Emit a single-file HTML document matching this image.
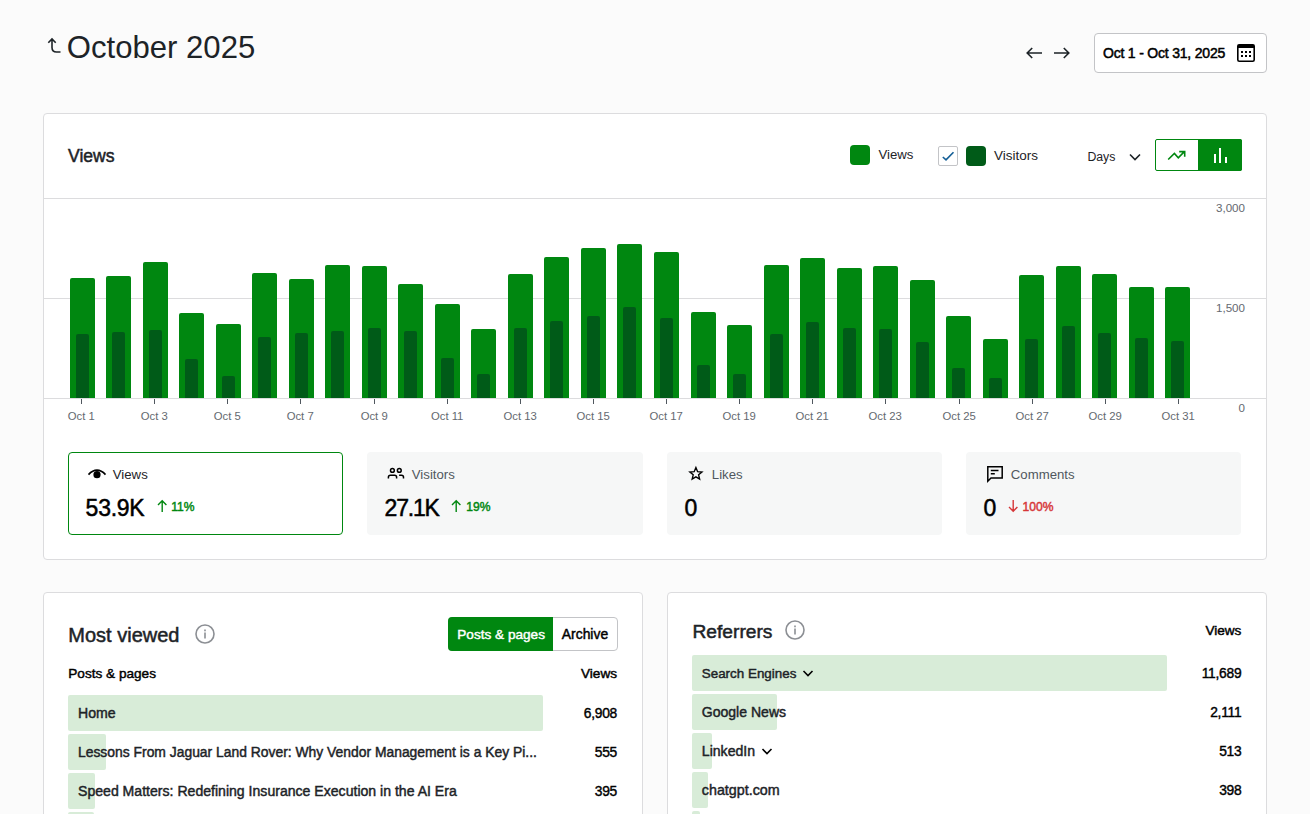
<!DOCTYPE html>
<html><head><meta charset="utf-8"><style>
html,body{margin:0;padding:0;}
body{width:1310px;height:814px;overflow:hidden;position:relative;background:#fbfbfb;font-family:"Liberation Sans", sans-serif;}
.t{position:absolute;white-space:nowrap;line-height:1;}
</style></head><body>
<svg style="position:absolute;left:44px;top:36px" width="20" height="20" viewBox="0 0 20 20"><path d="M8 3.2 L8 11.5 Q8 16 12.5 16 L16.5 16 M4.3 6.7 L8 3 L11.7 6.7" fill="none" stroke="#1d2327" stroke-width="1.6"/></svg>
<div class="t" style="left:66.8px;top:32px;font-size:31.1px;color:#1d2327;font-weight:400;">October 2025</div>
<svg style="position:absolute;left:1024px;top:44px" width="20" height="18" viewBox="0 0 20 18"><path d="M18 9 L3.2 9 M8.2 4 L3.2 9 L8.2 14" fill="none" stroke="#1d2327" stroke-width="1.6"/></svg>
<svg style="position:absolute;left:1052px;top:44px" width="20" height="18" viewBox="0 0 20 18"><path d="M2 9 L16.8 9 M11.8 4 L16.8 9 L11.8 14" fill="none" stroke="#1d2327" stroke-width="1.6"/></svg>
<div style="position:absolute;left:1094px;top:33px;width:173px;height:40px;box-sizing:border-box;background:#fff;border:1px solid #c3c4c7;border-radius:4px;"></div>
<div class="t" style="left:1103px;top:46px;font-size:14px;color:#000;font-weight:400;-webkit-text-stroke:0.5px #000;letter-spacing:-0.2px;">Oct 1 - Oct 31, 2025</div>
<svg style="position:absolute;left:1236px;top:43px" width="20" height="20" viewBox="0 0 20 20"><rect x="1.8" y="1.8" width="16.4" height="16.4" rx="1.5" fill="none" stroke="#000" stroke-width="1.6"/><rect x="1.8" y="1.8" width="16.4" height="3.2" fill="#000"/><rect x="5" y="8" width="2" height="2" fill="#000"/><rect x="5" y="12" width="2" height="2" fill="#000"/><rect x="9" y="8" width="2" height="2" fill="#000"/><rect x="9" y="12" width="2" height="2" fill="#000"/><rect x="13" y="8" width="2" height="2" fill="#000"/><rect x="13" y="12" width="2" height="2" fill="#000"/></svg>
<div style="position:absolute;left:43px;top:113px;width:1224px;height:447px;box-sizing:border-box;background:#fff;border:1px solid #dcdcde;border-radius:4px;"></div>
<div class="t" style="left:68px;top:148px;font-size:17.6px;color:#1d2327;font-weight:400;-webkit-text-stroke:0.5px #1d2327;">Views</div>
<div style="position:absolute;left:850px;top:145px;width:20px;height:20px;background:#008710;border-radius:4px;"></div>
<div class="t" style="left:878.5px;top:148px;font-size:13.2px;color:#1d2327;font-weight:400;">Views</div>
<div style="position:absolute;left:938px;top:146px;width:20px;height:20px;box-sizing:border-box;background:#fff;border:1px solid #c3c4c7;border-radius:2px;"></div>
<svg style="position:absolute;left:938px;top:146px" width="20" height="20" viewBox="0 0 20 20"><path d="M4.8 11 L8 13.8 L15.5 6.3" fill="none" stroke="#135e96" stroke-width="1.6"/></svg>
<div style="position:absolute;left:966px;top:146px;width:20px;height:20px;background:#005b18;border-radius:4px;"></div>
<div class="t" style="left:994px;top:149px;font-size:13.5px;color:#1d2327;font-weight:400;">Visitors</div>
<div class="t" style="left:1087.4px;top:151px;font-size:12.3px;color:#1d2327;font-weight:400;">Days</div>
<svg style="position:absolute;left:1127px;top:150px" width="16" height="14" viewBox="0 0 16 14"><path d="M3 4.5 L8 9.5 L13 4.5" fill="none" stroke="#1d2327" stroke-width="1.6"/></svg>
<div style="position:absolute;left:1155px;top:139px;width:87px;height:32px;box-sizing:border-box;background:#fff;border:1.5px solid #008710;border-radius:2px;"></div>
<div style="position:absolute;left:1198px;top:139px;width:44px;height:32px;background:#008710;border-radius:0 2px 2px 0;"></div>
<svg style="position:absolute;left:1166px;top:148px" width="22" height="16" viewBox="0 0 22 16"><path d="M2.2 11.5 L8.4 5.4 L12.3 9.8 L18.1 3.9 M13.2 3.6 L18.7 3.6 L18.7 8.8" fill="none" stroke="#008710" stroke-width="1.6"/></svg>
<div style="position:absolute;left:1213.6px;top:154px;width:2px;height:8.6px;background:#fff;"></div>
<div style="position:absolute;left:1219px;top:148px;width:2px;height:14.6px;background:#fff;"></div>
<div style="position:absolute;left:1224.5px;top:157px;width:2px;height:5.6px;background:#fff;"></div>
<div style="position:absolute;left:44px;top:198px;width:1222px;height:1px;background:#dcdcde;"></div>
<div style="position:absolute;left:44px;top:298px;width:1222px;height:1px;background:#dcdcde;"></div>
<div style="position:absolute;left:44px;top:398px;width:1222px;height:1px;background:#dcdcde;"></div>
<div style="position:absolute;left:70px;top:278px;width:25px;height:120px;background:#008710;border-radius:2px 2px 0 0;"></div>
<div style="position:absolute;left:76px;top:334px;width:13px;height:64px;background:#005b18;border-radius:2px 2px 0 0;"></div>
<div style="position:absolute;left:81px;top:399px;width:1px;height:5px;background:#50575e;"></div>
<div class="t" style="left:-218.8px;width:600px;text-align:center;top:411px;font-size:11.3px;color:#646970;font-weight:400;">Oct 1</div>
<div style="position:absolute;left:106px;top:276px;width:25px;height:122px;background:#008710;border-radius:2px 2px 0 0;"></div>
<div style="position:absolute;left:112px;top:332px;width:13px;height:66px;background:#005b18;border-radius:2px 2px 0 0;"></div>
<div style="position:absolute;left:143px;top:262px;width:25px;height:136px;background:#008710;border-radius:2px 2px 0 0;"></div>
<div style="position:absolute;left:149px;top:330px;width:13px;height:68px;background:#005b18;border-radius:2px 2px 0 0;"></div>
<div style="position:absolute;left:154px;top:399px;width:1px;height:5px;background:#50575e;"></div>
<div class="t" style="left:-145.8px;width:600px;text-align:center;top:411px;font-size:11.3px;color:#646970;font-weight:400;">Oct 3</div>
<div style="position:absolute;left:179px;top:313px;width:25px;height:85px;background:#008710;border-radius:2px 2px 0 0;"></div>
<div style="position:absolute;left:185px;top:359px;width:13px;height:39px;background:#005b18;border-radius:2px 2px 0 0;"></div>
<div style="position:absolute;left:216px;top:324px;width:25px;height:74px;background:#008710;border-radius:2px 2px 0 0;"></div>
<div style="position:absolute;left:222px;top:376px;width:13px;height:22px;background:#005b18;border-radius:2px 2px 0 0;"></div>
<div style="position:absolute;left:227px;top:399px;width:1px;height:5px;background:#50575e;"></div>
<div class="t" style="left:-72.80000000000001px;width:600px;text-align:center;top:411px;font-size:11.3px;color:#646970;font-weight:400;">Oct 5</div>
<div style="position:absolute;left:252px;top:273px;width:25px;height:125px;background:#008710;border-radius:2px 2px 0 0;"></div>
<div style="position:absolute;left:258px;top:337px;width:13px;height:61px;background:#005b18;border-radius:2px 2px 0 0;"></div>
<div style="position:absolute;left:289px;top:279px;width:25px;height:119px;background:#008710;border-radius:2px 2px 0 0;"></div>
<div style="position:absolute;left:295px;top:333px;width:13px;height:65px;background:#005b18;border-radius:2px 2px 0 0;"></div>
<div style="position:absolute;left:300px;top:399px;width:1px;height:5px;background:#50575e;"></div>
<div class="t" style="left:0.19999999999998863px;width:600px;text-align:center;top:411px;font-size:11.3px;color:#646970;font-weight:400;">Oct 7</div>
<div style="position:absolute;left:325px;top:265px;width:25px;height:133px;background:#008710;border-radius:2px 2px 0 0;"></div>
<div style="position:absolute;left:331px;top:331px;width:13px;height:67px;background:#005b18;border-radius:2px 2px 0 0;"></div>
<div style="position:absolute;left:362px;top:265.5px;width:25px;height:132.5px;background:#008710;border-radius:2px 2px 0 0;"></div>
<div style="position:absolute;left:368px;top:328px;width:13px;height:70px;background:#005b18;border-radius:2px 2px 0 0;"></div>
<div style="position:absolute;left:374px;top:399px;width:1px;height:5px;background:#50575e;"></div>
<div class="t" style="left:74.19999999999999px;width:600px;text-align:center;top:411px;font-size:11.3px;color:#646970;font-weight:400;">Oct 9</div>
<div style="position:absolute;left:398px;top:284px;width:25px;height:114px;background:#008710;border-radius:2px 2px 0 0;"></div>
<div style="position:absolute;left:404px;top:331px;width:13px;height:67px;background:#005b18;border-radius:2px 2px 0 0;"></div>
<div style="position:absolute;left:435px;top:304px;width:25px;height:94px;background:#008710;border-radius:2px 2px 0 0;"></div>
<div style="position:absolute;left:441px;top:358px;width:13px;height:40px;background:#005b18;border-radius:2px 2px 0 0;"></div>
<div style="position:absolute;left:447px;top:399px;width:1px;height:5px;background:#50575e;"></div>
<div class="t" style="left:147.2px;width:600px;text-align:center;top:411px;font-size:11.3px;color:#646970;font-weight:400;">Oct 11</div>
<div style="position:absolute;left:471px;top:329px;width:25px;height:69px;background:#008710;border-radius:2px 2px 0 0;"></div>
<div style="position:absolute;left:477px;top:374px;width:13px;height:24px;background:#005b18;border-radius:2px 2px 0 0;"></div>
<div style="position:absolute;left:508px;top:274px;width:25px;height:124px;background:#008710;border-radius:2px 2px 0 0;"></div>
<div style="position:absolute;left:514px;top:328px;width:13px;height:70px;background:#005b18;border-radius:2px 2px 0 0;"></div>
<div style="position:absolute;left:520px;top:399px;width:1px;height:5px;background:#50575e;"></div>
<div class="t" style="left:220.20000000000005px;width:600px;text-align:center;top:411px;font-size:11.3px;color:#646970;font-weight:400;">Oct 13</div>
<div style="position:absolute;left:544px;top:257px;width:25px;height:141px;background:#008710;border-radius:2px 2px 0 0;"></div>
<div style="position:absolute;left:550px;top:321px;width:13px;height:77px;background:#005b18;border-radius:2px 2px 0 0;"></div>
<div style="position:absolute;left:581px;top:248px;width:25px;height:150px;background:#008710;border-radius:2px 2px 0 0;"></div>
<div style="position:absolute;left:587px;top:316px;width:13px;height:82px;background:#005b18;border-radius:2px 2px 0 0;"></div>
<div style="position:absolute;left:593px;top:399px;width:1px;height:5px;background:#50575e;"></div>
<div class="t" style="left:293.20000000000005px;width:600px;text-align:center;top:411px;font-size:11.3px;color:#646970;font-weight:400;">Oct 15</div>
<div style="position:absolute;left:617px;top:244px;width:25px;height:154px;background:#008710;border-radius:2px 2px 0 0;"></div>
<div style="position:absolute;left:623px;top:307px;width:13px;height:91px;background:#005b18;border-radius:2px 2px 0 0;"></div>
<div style="position:absolute;left:654px;top:252px;width:25px;height:146px;background:#008710;border-radius:2px 2px 0 0;"></div>
<div style="position:absolute;left:660px;top:318px;width:13px;height:80px;background:#005b18;border-radius:2px 2px 0 0;"></div>
<div style="position:absolute;left:666px;top:399px;width:1px;height:5px;background:#50575e;"></div>
<div class="t" style="left:366.20000000000005px;width:600px;text-align:center;top:411px;font-size:11.3px;color:#646970;font-weight:400;">Oct 17</div>
<div style="position:absolute;left:691px;top:312px;width:25px;height:86px;background:#008710;border-radius:2px 2px 0 0;"></div>
<div style="position:absolute;left:697px;top:365px;width:13px;height:33px;background:#005b18;border-radius:2px 2px 0 0;"></div>
<div style="position:absolute;left:727px;top:325px;width:25px;height:73px;background:#008710;border-radius:2px 2px 0 0;"></div>
<div style="position:absolute;left:733px;top:374px;width:13px;height:24px;background:#005b18;border-radius:2px 2px 0 0;"></div>
<div style="position:absolute;left:739px;top:399px;width:1px;height:5px;background:#50575e;"></div>
<div class="t" style="left:439.20000000000005px;width:600px;text-align:center;top:411px;font-size:11.3px;color:#646970;font-weight:400;">Oct 19</div>
<div style="position:absolute;left:764px;top:265px;width:25px;height:133px;background:#008710;border-radius:2px 2px 0 0;"></div>
<div style="position:absolute;left:770px;top:334px;width:13px;height:64px;background:#005b18;border-radius:2px 2px 0 0;"></div>
<div style="position:absolute;left:800px;top:258px;width:25px;height:140px;background:#008710;border-radius:2px 2px 0 0;"></div>
<div style="position:absolute;left:806px;top:322px;width:13px;height:76px;background:#005b18;border-radius:2px 2px 0 0;"></div>
<div style="position:absolute;left:812px;top:399px;width:1px;height:5px;background:#50575e;"></div>
<div class="t" style="left:512.2px;width:600px;text-align:center;top:411px;font-size:11.3px;color:#646970;font-weight:400;">Oct 21</div>
<div style="position:absolute;left:837px;top:268px;width:25px;height:130px;background:#008710;border-radius:2px 2px 0 0;"></div>
<div style="position:absolute;left:843px;top:328px;width:13px;height:70px;background:#005b18;border-radius:2px 2px 0 0;"></div>
<div style="position:absolute;left:873px;top:266px;width:25px;height:132px;background:#008710;border-radius:2px 2px 0 0;"></div>
<div style="position:absolute;left:879px;top:329px;width:13px;height:69px;background:#005b18;border-radius:2px 2px 0 0;"></div>
<div style="position:absolute;left:885px;top:399px;width:1px;height:5px;background:#50575e;"></div>
<div class="t" style="left:585.2px;width:600px;text-align:center;top:411px;font-size:11.3px;color:#646970;font-weight:400;">Oct 23</div>
<div style="position:absolute;left:910px;top:280px;width:25px;height:118px;background:#008710;border-radius:2px 2px 0 0;"></div>
<div style="position:absolute;left:916px;top:342px;width:13px;height:56px;background:#005b18;border-radius:2px 2px 0 0;"></div>
<div style="position:absolute;left:946px;top:316px;width:25px;height:82px;background:#008710;border-radius:2px 2px 0 0;"></div>
<div style="position:absolute;left:952px;top:368px;width:13px;height:30px;background:#005b18;border-radius:2px 2px 0 0;"></div>
<div style="position:absolute;left:959px;top:399px;width:1px;height:5px;background:#50575e;"></div>
<div class="t" style="left:659.2px;width:600px;text-align:center;top:411px;font-size:11.3px;color:#646970;font-weight:400;">Oct 25</div>
<div style="position:absolute;left:983px;top:339px;width:25px;height:59px;background:#008710;border-radius:2px 2px 0 0;"></div>
<div style="position:absolute;left:989px;top:378px;width:13px;height:20px;background:#005b18;border-radius:2px 2px 0 0;"></div>
<div style="position:absolute;left:1019px;top:275px;width:25px;height:123px;background:#008710;border-radius:2px 2px 0 0;"></div>
<div style="position:absolute;left:1025px;top:339px;width:13px;height:59px;background:#005b18;border-radius:2px 2px 0 0;"></div>
<div style="position:absolute;left:1032px;top:399px;width:1px;height:5px;background:#50575e;"></div>
<div class="t" style="left:732.2px;width:600px;text-align:center;top:411px;font-size:11.3px;color:#646970;font-weight:400;">Oct 27</div>
<div style="position:absolute;left:1056px;top:265.5px;width:25px;height:132.5px;background:#008710;border-radius:2px 2px 0 0;"></div>
<div style="position:absolute;left:1062px;top:326px;width:13px;height:72px;background:#005b18;border-radius:2px 2px 0 0;"></div>
<div style="position:absolute;left:1092px;top:274px;width:25px;height:124px;background:#008710;border-radius:2px 2px 0 0;"></div>
<div style="position:absolute;left:1098px;top:333px;width:13px;height:65px;background:#005b18;border-radius:2px 2px 0 0;"></div>
<div style="position:absolute;left:1105px;top:399px;width:1px;height:5px;background:#50575e;"></div>
<div class="t" style="left:805.2px;width:600px;text-align:center;top:411px;font-size:11.3px;color:#646970;font-weight:400;">Oct 29</div>
<div style="position:absolute;left:1129px;top:287px;width:25px;height:111px;background:#008710;border-radius:2px 2px 0 0;"></div>
<div style="position:absolute;left:1135px;top:338px;width:13px;height:60px;background:#005b18;border-radius:2px 2px 0 0;"></div>
<div style="position:absolute;left:1165px;top:287px;width:25px;height:111px;background:#008710;border-radius:2px 2px 0 0;"></div>
<div style="position:absolute;left:1171px;top:341px;width:13px;height:57px;background:#005b18;border-radius:2px 2px 0 0;"></div>
<div style="position:absolute;left:1178px;top:399px;width:1px;height:5px;background:#50575e;"></div>
<div class="t" style="left:878.2px;width:600px;text-align:center;top:411px;font-size:11.3px;color:#646970;font-weight:400;">Oct 31</div>
<div class="t" style="right:65px;top:202px;font-size:11.6px;color:#646970;font-weight:400;">3,000</div>
<div class="t" style="right:65px;top:302px;font-size:11.6px;color:#646970;font-weight:400;">1,500</div>
<div class="t" style="right:65px;top:402px;font-size:11.6px;color:#646970;font-weight:400;">0</div>
<div style="position:absolute;left:68px;top:452px;width:275.25px;height:83px;box-sizing:border-box;background:#fff;border:1px solid #008710;border-radius:4px;"></div>
<div class="t" style="left:112.8px;top:468px;font-size:13.2px;color:#1d2327;font-weight:400;">Views</div>
<div class="t" style="left:85.6px;top:497px;font-size:23px;color:#000;font-weight:400;-webkit-text-stroke:0.5px #000;letter-spacing:-0.25px;">53.9K</div>
<svg style="position:absolute;left:157px;top:499px" width="11" height="14" viewBox="0 0 11 14"><path d="M5.2 13 L5.2 1.8 M1 6 L5.2 1.8 L9.4 6" fill="none" stroke="#008710" stroke-width="1.4"/></svg>
<div class="t" style="left:171.2px;top:501px;font-size:12.1px;color:#008710;font-weight:400;-webkit-text-stroke:0.45px #008710;">11%</div>
<div style="position:absolute;left:367.25px;top:452px;width:275.25px;height:83px;background:#f6f7f7;border-radius:4px;"></div>
<div class="t" style="left:411.8px;top:468px;font-size:13.2px;color:#50575e;font-weight:400;">Visitors</div>
<div class="t" style="left:384.6px;top:497px;font-size:23px;color:#000;font-weight:400;-webkit-text-stroke:0.5px #000;letter-spacing:-1.2px;">27.1K</div>
<svg style="position:absolute;left:451.3px;top:499px" width="11" height="14" viewBox="0 0 11 14"><path d="M5.2 13 L5.2 1.8 M1 6 L5.2 1.8 L9.4 6" fill="none" stroke="#008710" stroke-width="1.4"/></svg>
<div class="t" style="left:466.3px;top:501px;font-size:12.1px;color:#008710;font-weight:400;-webkit-text-stroke:0.45px #008710;">19%</div>
<div style="position:absolute;left:666.5px;top:452px;width:275.25px;height:83px;background:#f6f7f7;border-radius:4px;"></div>
<div class="t" style="left:711.8px;top:468px;font-size:13.2px;color:#50575e;font-weight:400;">Likes</div>
<div class="t" style="left:684.4px;top:497px;font-size:23px;color:#000;font-weight:400;-webkit-text-stroke:0.5px #000;">0</div>
<div style="position:absolute;left:965.75px;top:452px;width:275.25px;height:83px;background:#f6f7f7;border-radius:4px;"></div>
<div class="t" style="left:1010.8px;top:468px;font-size:13.2px;color:#50575e;font-weight:400;">Comments</div>
<div class="t" style="left:983.4px;top:497px;font-size:23px;color:#000;font-weight:400;-webkit-text-stroke:0.5px #000;">0</div>
<svg style="position:absolute;left:1007.5px;top:499px" width="11" height="14" viewBox="0 0 11 14"><path d="M5.2 1 L5.2 12.2 M1 8 L5.2 12.2 L9.4 8" fill="none" stroke="#d63638" stroke-width="1.4"/></svg>
<div class="t" style="left:1022.6px;top:501px;font-size:12.1px;color:#d63638;font-weight:400;-webkit-text-stroke:0.45px #d63638;">100%</div>
<svg style="position:absolute;left:87px;top:465px" width="20" height="16" viewBox="0 0 20 16"><path d="M1.5 9.6 Q10 0.8 18.5 9.6" fill="none" stroke="#000" stroke-width="1.7"/><circle cx="10" cy="9.7" r="3.6" fill="#000"/></svg>
<svg style="position:absolute;left:386px;top:465px" width="20" height="16" viewBox="0 0 20 16"><circle cx="6.4" cy="5.4" r="1.9" fill="none" stroke="#000" stroke-width="1.5"/><circle cx="13.3" cy="5.4" r="1.9" fill="none" stroke="#000" stroke-width="1.5"/><path d="M2.4 13.6 L2.4 12.2 Q2.4 10.2 4.4 10.2 L8.6 10.2 Q10.6 10.2 10.6 12.2 L10.6 13.6 M13.1 10.2 L15.5 10.2 Q17.5 10.2 17.5 12.2 L17.5 13.6" fill="none" stroke="#000" stroke-width="1.5"/></svg>
<svg style="position:absolute;left:686px;top:464px" width="20" height="18" viewBox="0 0 20 18"><path d="M9.9 3.6 L11.6 7.7 L15.9 8.0 L12.6 10.8 L13.6 15.1 L9.9 12.8 L6.2 15.1 L7.2 10.8 L3.9 8.0 L8.2 7.7 Z" fill="none" stroke="#000" stroke-width="1.4" stroke-linejoin="miter"/></svg>
<svg style="position:absolute;left:985px;top:464px" width="20" height="20" viewBox="0 0 20 20"><path d="M2.8 17.2 L2.8 2.8 L17.2 2.8 L17.2 14 L6 14 Z" fill="none" stroke="#000" stroke-width="1.5" stroke-linejoin="miter"/><path d="M5.8 6.6 L13.5 6.6 M5.8 9.8 L9.8 9.8" stroke="#000" stroke-width="1.5"/></svg>
<div style="position:absolute;left:43px;top:592px;width:600px;height:300px;box-sizing:border-box;background:#fff;border:1px solid #dcdcde;border-radius:4px;"></div>
<div class="t" style="left:68.3px;top:625px;font-size:20px;color:#1d2327;font-weight:400;-webkit-text-stroke:0.5px #1d2327;">Most viewed</div>
<svg style="position:absolute;left:194px;top:623px" width="22" height="22" viewBox="0 0 22 22"><circle cx="11" cy="11" r="9" fill="none" stroke="#8c8f94" stroke-width="1.6"/><rect x="10.2" y="9.5" width="1.6" height="6" fill="#8c8f94"/><rect x="10.2" y="6.5" width="1.6" height="1.8" fill="#8c8f94"/></svg>
<div style="position:absolute;left:448px;top:617px;width:170px;height:34px;box-sizing:border-box;background:#fff;border:1px solid #c3c4c7;border-radius:4px;"></div>
<div style="position:absolute;left:448px;top:617px;width:105px;height:34px;background:#008710;border-radius:4px 0 0 4px;"></div>
<div class="t" style="left:457.3px;top:628px;font-size:13.6px;color:#fff;font-weight:400;-webkit-text-stroke:0.45px #fff;">Posts &amp; pages</div>
<div class="t" style="left:561.8px;top:628px;font-size:13.9px;color:#000;font-weight:400;-webkit-text-stroke:0.45px #000;">Archive</div>
<div class="t" style="left:68.3px;top:667px;font-size:13.6px;color:#000;font-weight:400;-webkit-text-stroke:0.45px #000;">Posts &amp; pages</div>
<div class="t" style="right:693px;top:667px;font-size:13.6px;color:#000;font-weight:400;-webkit-text-stroke:0.45px #000;">Views</div>
<div style="position:absolute;left:68px;top:695px;width:474.6px;height:36px;background:#d8ecd8;border-radius:2px;"></div>
<div class="t" style="left:78px;top:706px;font-size:14.1px;color:#1d2327;font-weight:400;-webkit-text-stroke:0.45px #1d2327;">Home</div>
<div class="t" style="right:693px;top:707px;font-size:13.8px;color:#000;font-weight:400;-webkit-text-stroke:0.4px #000;letter-spacing:-0.25px;">6,908</div>
<div style="position:absolute;left:68px;top:734px;width:37.8px;height:36px;background:#d8ecd8;border-radius:2px;"></div>
<div class="t" style="left:78px;top:746px;font-size:13.88px;color:#1d2327;font-weight:400;-webkit-text-stroke:0.45px #1d2327;">Lessons From Jaguar Land Rover: Why Vendor Management is a Key Pi...</div>
<div class="t" style="right:693px;top:746px;font-size:13.8px;color:#000;font-weight:400;-webkit-text-stroke:0.4px #000;letter-spacing:-0.25px;">555</div>
<div style="position:absolute;left:68px;top:773px;width:26.8px;height:36px;background:#d8ecd8;border-radius:2px;"></div>
<div class="t" style="left:78px;top:784px;font-size:14.09px;color:#1d2327;font-weight:400;-webkit-text-stroke:0.45px #1d2327;">Speed Matters: Redefining Insurance Execution in the AI Era</div>
<div class="t" style="right:693px;top:785px;font-size:13.8px;color:#000;font-weight:400;-webkit-text-stroke:0.4px #000;letter-spacing:-0.25px;">395</div>
<div style="position:absolute;left:68px;top:812px;width:25.6px;height:36px;background:#d8ecd8;border-radius:2px;"></div>
<div style="position:absolute;left:667px;top:592px;width:600px;height:300px;box-sizing:border-box;background:#fff;border:1px solid #dcdcde;border-radius:4px;"></div>
<div class="t" style="left:692.5px;top:622px;font-size:19.2px;color:#1d2327;font-weight:400;-webkit-text-stroke:0.5px #1d2327;">Referrers</div>
<svg style="position:absolute;left:784px;top:619px" width="22" height="22" viewBox="0 0 22 22"><circle cx="11" cy="11" r="9" fill="none" stroke="#8c8f94" stroke-width="1.6"/><rect x="10.2" y="9.5" width="1.6" height="6" fill="#8c8f94"/><rect x="10.2" y="6.5" width="1.6" height="1.8" fill="#8c8f94"/></svg>
<div class="t" style="right:68.59999999999991px;top:624px;font-size:13.6px;color:#000;font-weight:400;-webkit-text-stroke:0.45px #000;">Views</div>
<div style="position:absolute;left:692px;top:655px;width:474.8px;height:36px;background:#d8ecd8;border-radius:2px;"></div>
<div class="t" style="left:701.8px;top:667px;font-size:13.4px;color:#1d2327;font-weight:400;-webkit-text-stroke:0.45px #1d2327;">Search Engines</div>
<div class="t" style="right:68.59999999999991px;top:667px;font-size:13.8px;color:#000;font-weight:400;-webkit-text-stroke:0.4px #000;letter-spacing:-0.25px;">11,689</div>
<div style="position:absolute;left:692px;top:694px;width:84.8px;height:36px;background:#d8ecd8;border-radius:2px;"></div>
<div class="t" style="left:701.8px;top:705px;font-size:14.04px;color:#1d2327;font-weight:400;-webkit-text-stroke:0.45px #1d2327;">Google News</div>
<div class="t" style="right:68.59999999999991px;top:706px;font-size:13.8px;color:#000;font-weight:400;-webkit-text-stroke:0.4px #000;letter-spacing:-0.25px;">2,111</div>
<div style="position:absolute;left:692px;top:733px;width:19.8px;height:36px;background:#d8ecd8;border-radius:2px;"></div>
<div class="t" style="left:701.8px;top:744px;font-size:14.1px;color:#1d2327;font-weight:400;-webkit-text-stroke:0.45px #1d2327;">LinkedIn</div>
<div class="t" style="right:68.59999999999991px;top:745px;font-size:13.8px;color:#000;font-weight:400;-webkit-text-stroke:0.4px #000;letter-spacing:-0.25px;">513</div>
<div style="position:absolute;left:692px;top:772px;width:15.9px;height:36px;background:#d8ecd8;border-radius:2px;"></div>
<div class="t" style="left:701.8px;top:783px;font-size:14.3px;color:#1d2327;font-weight:400;-webkit-text-stroke:0.45px #1d2327;">chatgpt.com</div>
<div class="t" style="right:68.59999999999991px;top:784px;font-size:13.8px;color:#000;font-weight:400;-webkit-text-stroke:0.4px #000;letter-spacing:-0.25px;">398</div>
<div style="position:absolute;left:692px;top:811px;width:7.8px;height:36px;background:#d8ecd8;border-radius:2px;"></div>
<svg style="position:absolute;left:801px;top:666px" width="14" height="14" viewBox="0 0 14 14"><path d="M2.5 5 L7 9.5 L11.5 5" fill="none" stroke="#000" stroke-width="1.6"/></svg>
<svg style="position:absolute;left:760px;top:744px" width="14" height="14" viewBox="0 0 14 14"><path d="M2.5 5 L7 9.5 L11.5 5" fill="none" stroke="#000" stroke-width="1.6"/></svg>
</body></html>
